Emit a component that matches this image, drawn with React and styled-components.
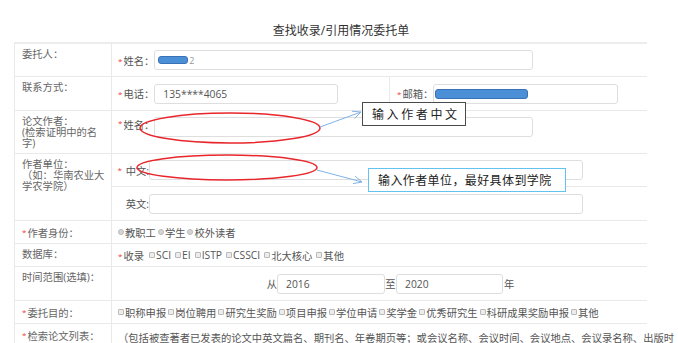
import styled, { createGlobalStyle } from "styled-components";

const GlobalStyle = createGlobalStyle`
  *, *::before, *::after { box-sizing: border-box; }
  html, body { margin: 0; padding: 0; overflow: hidden; background: #fff; }
  body { font-family: "Open Sans", "Noto Sans CJK SC", sans-serif; }
`;

const Page = styled.div`
  position: relative;
  width: 678px;
  height: 343px;
  overflow: hidden;
  padding: 23px 0 0 14px;
`;

const Title = styled.div`
  width: 654px;
  text-align: center;
  font-size: 12px;
  line-height: 16px;
  color: #333;
  margin-bottom: 3px;
`;

const Table = styled.div`
  width: 633px;
  border-top: 2px solid #ececec;
  border-left: 1px solid #e9e9e9;
`;

const Row = styled.div`
  display: grid;
  grid-template-columns: ${(p) => p.$cols || "97px 1fr"};
  min-height: ${(p) => p.$h}px;
  border-bottom: 1px solid #e9e9e9;
`;

const LabelCell = styled.div`
  border-right: 1px solid #e9e9e9;
  padding: 5px 4px 0 7px;
  font-size: 10.3px;
  line-height: 11px;
  color: #666;
`;

const FieldCell = styled.div`
  display: flex;
  align-items: ${(p) => (p.$top ? "flex-start" : "center")};
  padding: ${(p) => (p.$top ? "6px" : "0")} 6px 0 ${(p) => p.$pl || 6}px;
  font-size: 10.3px;
  color: #555;
  white-space: nowrap;
  min-width: 0;
  border-right: ${(p) => (p.$divider ? "1px solid #e9e9e9" : "none")};
`;

const Star = styled.span`
  color: #f03c3c;
  font-size: 8px;
  vertical-align: 2px;
  margin-right: 1px;
`;

const FieldLabel = styled.span`
  color: #555;
`;

const Input = styled.div`
  width: ${(p) => p.$w}px;
  height: 20px;
  flex: none;
  display: flex;
  align-items: center;
  padding: 0 ${(p) => (p.$pl !== undefined ? p.$pl : 8)}px;
  border: 1px solid #dedede;
  border-radius: 3px;
  background: #fff;
  color: #555;
  font-size: 10.3px;
`;

const Blob = styled.span`
  display: inline-block;
  width: ${(p) => p.$w}px;
  height: ${(p) => p.$h}px;
  background: #4b8fd6;
  border: 1px solid #3a72b8;
  border-radius: 3px;
`;

const Ghost = styled.span`
  color: #999;
  font-size: 9px;
  margin-left: 1px;
`;

const SubStack = styled.div`
  display: flex;
  flex-direction: column;
`;

const SubRow = styled.div`
  display: flex;
  align-items: center;
  height: ${(p) => p.$h}px;
  border-bottom: ${(p) => (p.$line ? "1px solid #e9e9e9" : "none")};
  font-size: 10.3px;
  color: #555;
`;

const SubLabel = styled.span`
  width: 37px;
  text-align: right;
  white-space: nowrap;
`;

const Choice = styled.span`
  display: inline-flex;
  align-items: center;
  margin-right: ${(p) => p.$gap}px;
`;

const Mark = styled.span`
  display: inline-block;
  width: 6px;
  height: 6px;
  margin-right: 1px;
  border: 1px solid #b9b9b9;
  border-radius: ${(p) => (p.$round ? "50%" : "1px")};
  background: ${(p) => (p.$round ? "#d6d6d6" : "#ececec")};
`;

const TimeGrid = styled.div`
  display: grid;
  grid-template-columns: 159px 108px 11px 107px auto;
  align-items: center;
`;

const RightText = styled.span`
  text-align: right;
`;

const CenterText = styled.span`
  text-align: center;
`;

const YearText = styled.span`
  padding-left: 1px;
`;

const Overlay = styled.svg`
  position: absolute;
  left: 0;
  top: 0;
  pointer-events: none;
`;

const Callout = styled.div`
  position: absolute;
  left: ${(p) => p.$x}px;
  top: ${(p) => p.$y}px;
  width: ${(p) => p.$w}px;
  height: 24px;
  padding-left: 9px;
  border: ${(p) => (p.$blue ? "1.5px solid #62c3ee" : "1px solid #4a4a4a")};
  background: #fff;
  font-family: "Noto Sans CJK SC", sans-serif;
  font-size: 12px;
  line-height: 21px;
  letter-spacing: ${(p) => p.$ls}px;
  color: #222;
  white-space: nowrap;
`;

const Checks = ({ items, round, gap = 2 }) =>
  items.map((t) => (
    <Choice key={t} $gap={gap}>
      <Mark $round={round} />
      {t}
    </Choice>
  ));

export default function App() {
  return (
    <Page>
      <GlobalStyle />
      <Title>查找收录/引用情况委托单</Title>
      <Table>
        <Row $h={33}>
          <LabelCell>委托人：</LabelCell>
          <FieldCell>
            <Star>*</Star>
            <FieldLabel>姓名：</FieldLabel>
            <Input $w={379} $pl={3}>
              <Blob $w={30} $h={8} />
              <Ghost>2</Ghost>
            </Input>
          </FieldCell>
        </Row>
        <Row $h={34} $cols="97px 278px 1fr">
          <LabelCell>联系方式：</LabelCell>
          <FieldCell $divider>
            <Star>*</Star>
            <FieldLabel>电话：</FieldLabel>
            <Input $w={184}>135****4065</Input>
          </FieldCell>
          <FieldCell $pl={7}>
            <Star>*</Star>
            <FieldLabel>邮箱：</FieldLabel>
            <Input $w={185} $pl={1}>
              <Blob $w={93} $h={10} />
            </Input>
          </FieldCell>
        </Row>
        <Row $h={43}>
          <LabelCell>
            论文作者：
            <br />
            (检索证明中的名
            <br />
            字)
          </LabelCell>
          <FieldCell $top>
            <Star>*</Star>
            <FieldLabel>姓名：</FieldLabel>
            <Input $w={379} />
          </FieldCell>
        </Row>
        <Row $h={67}>
          <LabelCell>
            作者单位：
            <br />
            （如：华南农业大
            <br />
            学农学院）
          </LabelCell>
          <SubStack>
            <SubRow $h={33} $line>
              <SubLabel>
                <Star>*</Star> 中文:
              </SubLabel>
              <Input $w={434} />
            </SubRow>
            <SubRow $h={33}>
              <SubLabel>英文:</SubLabel>
              <Input $w={434} />
            </SubRow>
          </SubStack>
        </Row>
        <Row $h={23}>
          <LabelCell>
            <Star>*</Star>作者身份：
          </LabelCell>
          <FieldCell>
            <Checks round items={["教职工", "学生", "校外读者"]} />
          </FieldCell>
        </Row>
        <Row $h={23}>
          <LabelCell>数据库：</LabelCell>
          <FieldCell>
            <Choice $gap={5}>
              <Star>*</Star>收录
            </Choice>
            <Checks gap={4} items={["SCI", "EI", "ISTP", "CSSCI", "北大核心", "其他"]} />
          </FieldCell>
        </Row>
        <Row $h={34}>
          <LabelCell>时间范围(选填)：</LabelCell>
          <FieldCell>
            <TimeGrid>
              <RightText>从</RightText>
              <Input $w={108}>2016</Input>
              <CenterText>至</CenterText>
              <Input $w={107}>2020</Input>
              <YearText>年</YearText>
            </TimeGrid>
          </FieldCell>
        </Row>
        <Row $h={23}>
          <LabelCell>
            <Star>*</Star>委托目的：
          </LabelCell>
          <FieldCell>
            <Checks
              items={[
                "职称申报",
                "岗位聘用",
                "研究生奖励",
                "项目申报",
                "学位申请",
                "奖学金",
                "优秀研究生",
                "科研成果奖励申报",
                "其他",
              ]}
            />
          </FieldCell>
        </Row>
        <Row $h={40}>
          <LabelCell>
            <Star>*</Star>检索论文列表：
          </LabelCell>
          <FieldCell $top $pl={6}>
            （包括被查著者已发表的论文中英文篇名、期刊名、年卷期页等；或会议名称、会议时间、会议地点、会议录名称、出版时
          </FieldCell>
        </Row>
      </Table>

      <Overlay width="678" height="343" viewBox="0 0 678 343">
        <ellipse cx="230" cy="128" rx="90" ry="15" fill="none" stroke="#e8262b" strokeWidth="1.5" />
        <ellipse cx="227" cy="167.5" rx="90" ry="12.5" fill="none" stroke="#e8262b" strokeWidth="1.5" />
        <g fill="none" stroke="#7fb2e5" strokeWidth="1">
          <line x1="320" y1="127" x2="361" y2="112" />
          <polyline points="352,111.2 361,112 354.6,118.4" />
          <line x1="317" y1="170" x2="362" y2="182" />
          <polyline points="355.1,176.2 362,182 353.1,183.6" />
        </g>
      </Overlay>
      <Callout $x={362} $y={102} $w={104} $ls={2.6}>
        输入作者中文
      </Callout>
      <Callout $x={368} $y={168} $w={198} $ls={0.4} $blue>
        输入作者单位，最好具体到学院
      </Callout>
    </Page>
  );
}
